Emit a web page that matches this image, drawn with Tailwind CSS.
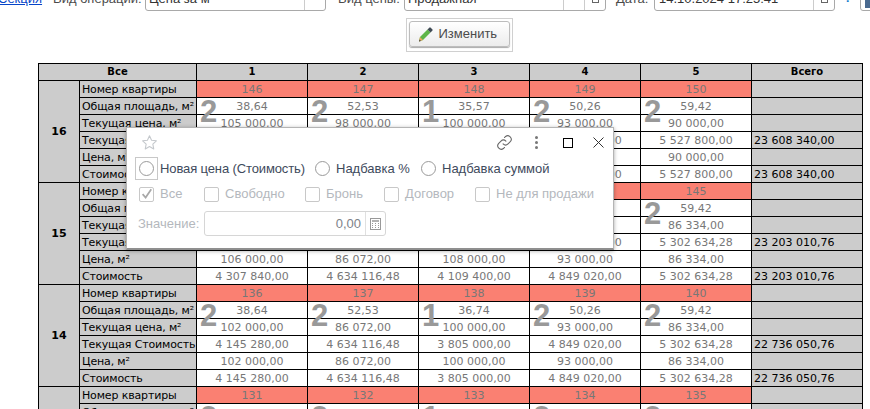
<!DOCTYPE html>
<html lang="ru">
<head>
  <meta charset="UTF-8">
  <title>Изменить цены</title>
  <script src="https://cdn.jsdelivr.net/npm/@tailwindcss/browser@4"></script>
</head>
<body class="bg-white overflow-hidden h-[409px] relative font-['Liberation_Sans',sans-serif]">

  <!-- Верхняя панель -->
  <div class="h-[11px] overflow-hidden flex items-end text-[13px] text-[#4b4b4b] leading-[16px] whitespace-nowrap">
    <a class="w-[55px] shrink-0 text-[#0645c8] underline -ml-[2px] mb-[4px]">Секция</a>
    <span class="w-[92px] shrink-0 mb-[4px]">Вид операции:</span>
    <div class="w-[181px] shrink-0 h-[30px] border border-[#a9a9a9] rounded-[3px] flex pl-[3px] text-[#333] items-end">
      <span class="flex-1 mb-[3px]">Цена за м²</span>
      <span class="w-[21px] h-full border-l border-[#ccc]"></span>
    </div>
    <span class="w-[78px] pl-[12px] shrink-0 mb-[4px]">Вид цены:</span>
    <div class="w-[202px] shrink-0 h-[30px] border border-[#a9a9a9] rounded-[3px] flex pl-[3px] text-[#333] items-end">
      <span class="flex-1 mb-[3px]">Продажная</span>
      <span class="w-[21px] h-full border-l border-[#ccc]"></span>
      <span class="w-[21px] h-full border-l border-[#ccc] flex items-end justify-center">
        <span class="w-[7px] h-[7px] border border-[#666] mb-[7px]"></span>
      </span>
    </div>
    <span class="w-[48px] pl-[10px] shrink-0 mb-[4px]">Дата:</span>
    <div class="w-[181px] shrink-0 h-[30px] border border-[#a9a9a9] rounded-[3px] flex pl-[4px] text-[#333] items-end">
      <span class="flex-1 mb-[3px]">14.10.2024 17:25:41</span>
      <span class="w-[21px] h-full border-l border-[#ccc] flex items-end justify-center">
        <span class="w-[7px] h-[7px] border border-[#666] mb-[7px]"></span>
      </span>
    </div>
    <span class="ml-[9px] text-[#1a7fd0] font-bold mb-[5px]">?</span>
    <div class="ml-[8px] w-[20px] h-[30px] border border-[#a9a9a9] rounded-[3px] shrink-0 pl-[4px] flex items-end">
      <span class="w-full h-[8px] bg-[#4a6a90] mb-[2px]"></span>
    </div>
  </div>

  <!-- Кнопка -->
  <div class="flex justify-center pt-[7px] pl-[48px] h-[52px]">
    <div class="w-[107px] h-[34px] border border-[#d0d0d0] p-[2px]">
      <button class="w-[101px] h-[26px] border border-[#bdbdbd] rounded-[3px] bg-gradient-to-b from-white to-[#ececec] flex items-center text-[13px] text-[#4b4b4b] pl-[7px] gap-[5px] shadow-[0_1px_1px_#aaa]">
        <svg width="17" height="17" viewBox="0 0 17 17">
          <path d="M2 15.500l1-4.500 7.500-7.500 3 3-7.500 7.500z" fill="#5fb548"/>
          <path d="M10.500 3.500l1.800-1.800a1 1 0 0 1 1.400 0l1.600 1.600a1 1 0 0 1 0 1.400l-1.800 1.800z" fill="#3f4a55"/>
          <path d="M2 15.500l1-4.500 3 3z" fill="#e8a860"/>
          <path d="M2 15.500l.5-2 1.500 1.500z" fill="#444"/>
        </svg>
        Изменить
      </button>
    </div>
  </div>

  <!-- Таблица цен -->
  <div class="pl-[38px]">
    <table class="table-fixed border-collapse w-[825px] text-[11px] font-['DejaVu_Sans',sans-serif] leading-none">
      <colgroup>
        <col class="w-[41px]"><col class="w-[117px]">
        <col class="w-[111px]"><col class="w-[111px]"><col class="w-[111px]"><col class="w-[111px]"><col class="w-[111px]"><col class="w-[111px]">
      </colgroup>
      <tbody id="priceTable">
        <tr class="h-[17px] bg-[#cccccc] font-bold text-[10px] text-black text-center">
          <td colspan="2" class="border border-black">Все</td>
          <td class="border border-black">1</td>
          <td class="border border-black">2</td>
          <td class="border border-black">3</td>
          <td class="border border-black">4</td>
          <td class="border border-black">5</td>
          <td class="border border-black">Всего</td>
        </tr>
      </tbody>
    </table>
  </div>

  <!-- Диалог поверх таблицы -->
  <div class="absolute z-20 left-[126px] top-[127px] w-[488px] h-[123px] bg-white border border-[#b4b4b4] border-b-2 border-b-[#8f8f8f] shadow-[0_1px_4px_rgba(0,0,0,0.35)] text-[13px] leading-[16px]">
    <div class="h-[29px] flex items-center pl-[14px] pr-[9px]">
      <svg width="17" height="17" viewBox="0 0 24 24" fill="none" stroke="#c4c8cc" stroke-width="1.500" stroke-linejoin="round"><path d="M12 2.500l2.900 6.300 6.800.8-5 4.700 1.300 6.800-6-3.400-6 3.400 1.300-6.800-5-4.700 6.800-.8z"/></svg>
      <div class="ml-auto flex items-center">
        <svg width="17" height="17" viewBox="0 0 24 24" fill="none" stroke="#666" stroke-width="1.500" stroke-linecap="round"><path d="M10 14a5 5 0 0 0 7 0l3.500-3.500a5 5 0 0 0-7-7L12 5"/><path d="M14 10a5 5 0 0 0-7 0l-3.500 3.500a5 5 0 0 0 7 7L12 19"/></svg>
        <div class="ml-[22px] w-[3px] flex flex-col gap-[2px]">
          <span class="h-[3px] bg-[#777] rounded-full"></span>
          <span class="h-[3px] bg-[#777] rounded-full"></span>
          <span class="h-[3px] bg-[#777] rounded-full"></span>
        </div>
        <div class="ml-[25px] w-[10px] h-[10px] border border-black"></div>
        <svg class="ml-[20px]" width="11" height="11" viewBox="0 0 11 11" stroke="#333" stroke-width="1"><path d="M.5.500l10 10M10.500.500l-10 10"/></svg>
      </div>
    </div>

    <div class="h-[23px] flex items-center pl-[8px] text-[#3e4a5c] whitespace-nowrap">
      <div class="w-[23px] h-[23px] border border-[#c8c8c8] flex items-center justify-center shrink-0">
        <span class="w-[15px] h-[15px] rounded-full border border-[#9a9a9a]"></span>
      </div>
      <span class="ml-[2px] w-[155px] shrink-0 tracking-[-0.12px]">Новая цена (Стоимость)</span>
      <span class="w-[15px] h-[15px] rounded-full border border-[#9a9a9a] shrink-0"></span>
      <span class="ml-[6px] w-[85px] shrink-0">Надбавка %</span>
      <span class="w-[15px] h-[15px] rounded-full border border-[#9a9a9a] shrink-0"></span>
      <span class="ml-[6px]">Надбавка суммой</span>
    </div>

    <div class="mt-[3px] h-[22px] flex items-center pl-[12px] text-[#b4b8bd] whitespace-nowrap">
      <div class="w-[15px] h-[15px] border border-[#c8c8c8] rounded-[2px] shrink-0 flex items-center justify-center">
        <svg width="15" height="15" viewBox="0 0 15 15" fill="none" stroke="#a8a8a8" stroke-width="2"><path d="M3 7l3.500 4L13 1.500"/></svg>
      </div>
      <span class="ml-[6px] w-[44px] shrink-0">Все</span>
      <span class="w-[15px] h-[15px] border border-[#c8c8c8] rounded-[2px] shrink-0"></span>
      <span class="ml-[6px] w-[80px] shrink-0">Свободно</span>
      <span class="w-[15px] h-[15px] border border-[#c8c8c8] rounded-[2px] shrink-0"></span>
      <span class="ml-[6px] w-[58px] shrink-0">Бронь</span>
      <span class="w-[15px] h-[15px] border border-[#c8c8c8] rounded-[2px] shrink-0"></span>
      <span class="ml-[6px] w-[70px] shrink-0">Договор</span>
      <span class="w-[15px] h-[15px] border border-[#c8c8c8] rounded-[2px] shrink-0"></span>
      <span class="ml-[6px]">Не для продажи</span>
    </div>

    <div class="mt-[6px] flex items-center pl-[11px] text-[#b4b8bd]">
      <span class="w-[66px] shrink-0">Значение:</span>
      <div class="w-[182px] h-[25px] border border-[#d6d6d6] rounded-[3px] flex items-center">
        <span class="flex-1 text-right pr-[4px] text-[#7d8289]">0,00</span>
        <span class="w-[20px] h-full border-l border-[#e0e0e0] flex items-center justify-center">
          <svg width="11" height="12" viewBox="0 0 11 12" fill="none" stroke="#999"><rect x=".5" y=".5" width="10" height="11"/><path d="M2 3h7" stroke-width="1.500"/><path d="M2 5.500h1M5 5.500h1M8 5.500h1M2 7.500h1M5 7.500h1M8 7.500h1M2 9.500h1M5 9.500h1M8 9.500h1"/></svg>
        </span>
      </div>
    </div>
  </div>

  <script>
    const floors = [
      { n: 16, apts: [146,147,148,149,150], digits: [2,2,1,2,2],
        rows: [
          ["38,64","52,53","35,57","50,26","59,42"],
          ["105 000,00","98 000,00","100 000,00","93 000,00","90 000,00"],
          ["4 057 200,00","5 147 940,00","3 557 000,00","4 674 180,00","5 527 800,00"],
          ["105 000,00","98 000,00","100 000,00","93 000,00","90 000,00"],
          ["4 057 200,00","5 147 940,00","3 557 000,00","4 674 180,00","5 527 800,00"]
        ], total: "23 608 340,00" },
      { n: 15, apts: [141,142,143,144,145], digits: [2,2,1,2,2],
        rows: [
          ["40,64","53,84","38,05","52,14","59,42"],
          ["106 000,00","86 072,00","108 000,00","93 000,00","86 334,00"],
          ["4 307 840,00","4 634 116,48","4 109 400,00","4 849 020,00","5 302 634,28"],
          ["106 000,00","86 072,00","108 000,00","93 000,00","86 334,00"],
          ["4 307 840,00","4 634 116,48","4 109 400,00","4 849 020,00","5 302 634,28"]
        ], total: "23 203 010,76" },
      { n: 14, apts: [136,137,138,139,140], digits: [2,2,1,2,2],
        rows: [
          ["38,64","52,53","36,74","50,26","59,42"],
          ["102 000,00","86 072,00","100 000,00","93 000,00","86 334,00"],
          ["4 145 280,00","4 634 116,48","3 805 000,00","4 849 020,00","5 302 634,28"],
          ["102 000,00","86 072,00","100 000,00","93 000,00","86 334,00"],
          ["4 145 280,00","4 634 116,48","3 805 000,00","4 849 020,00","5 302 634,28"]
        ], total: "22 736 050,76" },
      { n: 13, apts: [131,132,133,134,135], digits: [2,2,1,2,2],
        rows: [
          ["","","","",""],
          ["","","","",""],
          ["","","","",""],
          ["","","","",""],
          ["","","","",""]
        ], total: "" }
    ];
    const labels = ["Общая площадь, м²", "Текущая цена, м²", "Текущая Стоимость", "Цена, м²", "Стоимость"];
    const label = "border border-black bg-[#cccccc] text-black pl-[2px] whitespace-nowrap overflow-hidden tracking-[-0.15px]";
    const value = "border border-black text-center text-[#777777] bg-white relative";

    let html = "";
    floors.forEach(floor => {
      html += `<tr class="h-[17px]">
        <td rowspan="6" class="border border-black bg-[#cccccc] text-center font-bold text-black">${floor.n}</td>
        <td class="${label}">Номер квартиры</td>
        ${floor.apts.map(a => `<td class="border border-black bg-[#fa8072] text-center text-[#777777]">${a}</td>`).join("")}
        <td class="border border-black bg-[#cccccc]"></td>
      </tr>`;
      floor.rows.forEach((row, i) => {
        html += `<tr class="h-[17px]">
          <td class="${label}">${labels[i]}</td>
          ${row.map((v, c) => {
            // крупная цифра - число комнат, лежит поверх двух строк
            const digit = i === 0 ? `<span class="absolute z-10 left-[3px] top-[2px] font-['Liberation_Sans',sans-serif] font-bold text-[31px] leading-[24px] text-[#999999]">${floor.digits[c]}</span>` : "";
            return `<td class="${value}">${digit}${v}</td>`;
          }).join("")}
          <td class="border border-black bg-[#cccccc] text-black pl-[2px]">${i === 2 || i === 4 ? floor.total : ""}</td>
        </tr>`;
      });
    });
    document.getElementById("priceTable").insertAdjacentHTML("beforeend", html);
  </script>
</body>
</html>
